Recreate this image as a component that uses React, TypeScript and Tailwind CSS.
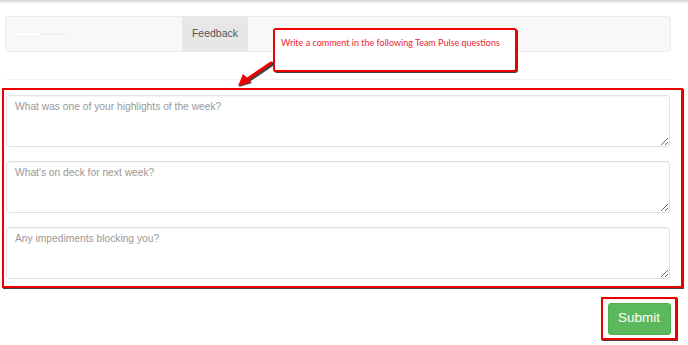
import React from "react";

const QUESTIONS = [
  "What was one of your highlights of the week?",
  "What's on deck for next week?",
  "Any impediments blocking you?",
];

export default function App() {
  return (
    <div className="relative w-[688px] h-[345px] bg-white overflow-hidden font-['Liberation_Sans',Arial,sans-serif]">
      {/* top shadow */}
      <div className="h-[4px] bg-gradient-to-b from-[#d6d6d6] to-white" />

      {/* Nav */}
      <div className="mt-[12px] ml-[5px] w-[666px] h-[36px] flex items-stretch bg-[#f8f8f8] border border-[#ececec] rounded-[3px]">
        <div className="w-[176px] flex items-center pl-[7px]">
          <div className="w-[27px] h-[2px] bg-white" />
          <div className="w-[27px] h-[2px] bg-[#f1f1f1]" />
        </div>
        <div className="w-[66px] flex items-center justify-center bg-[#e7e7e7] text-[10.5px] text-[#555]">Feedback</div>
      </div>

      {/* hr */}
      <div className="mt-[27px] ml-[6px] w-[665px] h-px bg-[#f0f0f0]" />

      {/* Questions */}
      <div className="mt-[8px] ml-[2px] w-[681px] border-2 border-[#ee0000] shadow-[1px_1px_0_#444] pt-[5px] pb-[7px] pl-[2px] flex flex-col gap-[14px]">
        {QUESTIONS.map((q) => (
          <textarea
            key={q}
            placeholder={q}
            className="w-[664px] h-[52px] block border border-[#e0e0e0] rounded-[3px] shadow-[inset_0_1px_1px_rgba(0,0,0,0.04)] px-[8px] pt-[3px] text-[10.25px] text-[#555] placeholder:text-[#999] outline-none"
          />
        ))}
      </div>

      {/* Submit */}
      <div className="mt-[9px] ml-[601px] w-[76px] h-[43px] border-2 border-[#ee0000] shadow-[1px_1px_0_#444] flex items-center justify-center">
        <button className="w-[63px] h-[32px] bg-[#5cb85c] border border-[#4cae4c] rounded-[3px] text-white text-[13.5px]">Submit</button>
      </div>

      {/* Callout */}
      <div className="absolute left-[273px] top-[28px] w-[244px] h-[44px] bg-white border-2 border-[#ee0000] rounded-[3px] shadow-[1px_1px_0_#444] pl-[6px] pt-[6px] text-[9px] text-[#ee2233] font-['Lato',sans-serif]">
        Write a comment in the following Team Pulse questions
      </div>

      {/* Arrow */}
      <svg className="absolute left-[234px] top-[58px]" width="44" height="32" viewBox="0 0 44 32">
        <g transform="translate(1,1)">
          <path d="M37 5 L12 22" stroke="#444" strokeWidth="4.5" strokeLinecap="round" />
          <path d="M4 28 L9 16 L17 24 Z" fill="#444" />
        </g>
        <path d="M37 5 L12 22" stroke="#ee0000" strokeWidth="3" strokeLinecap="round" />
        <path d="M4 28 L9 16 L17 24 Z" fill="#ee0000" />
      </svg>
    </div>
  );
}
